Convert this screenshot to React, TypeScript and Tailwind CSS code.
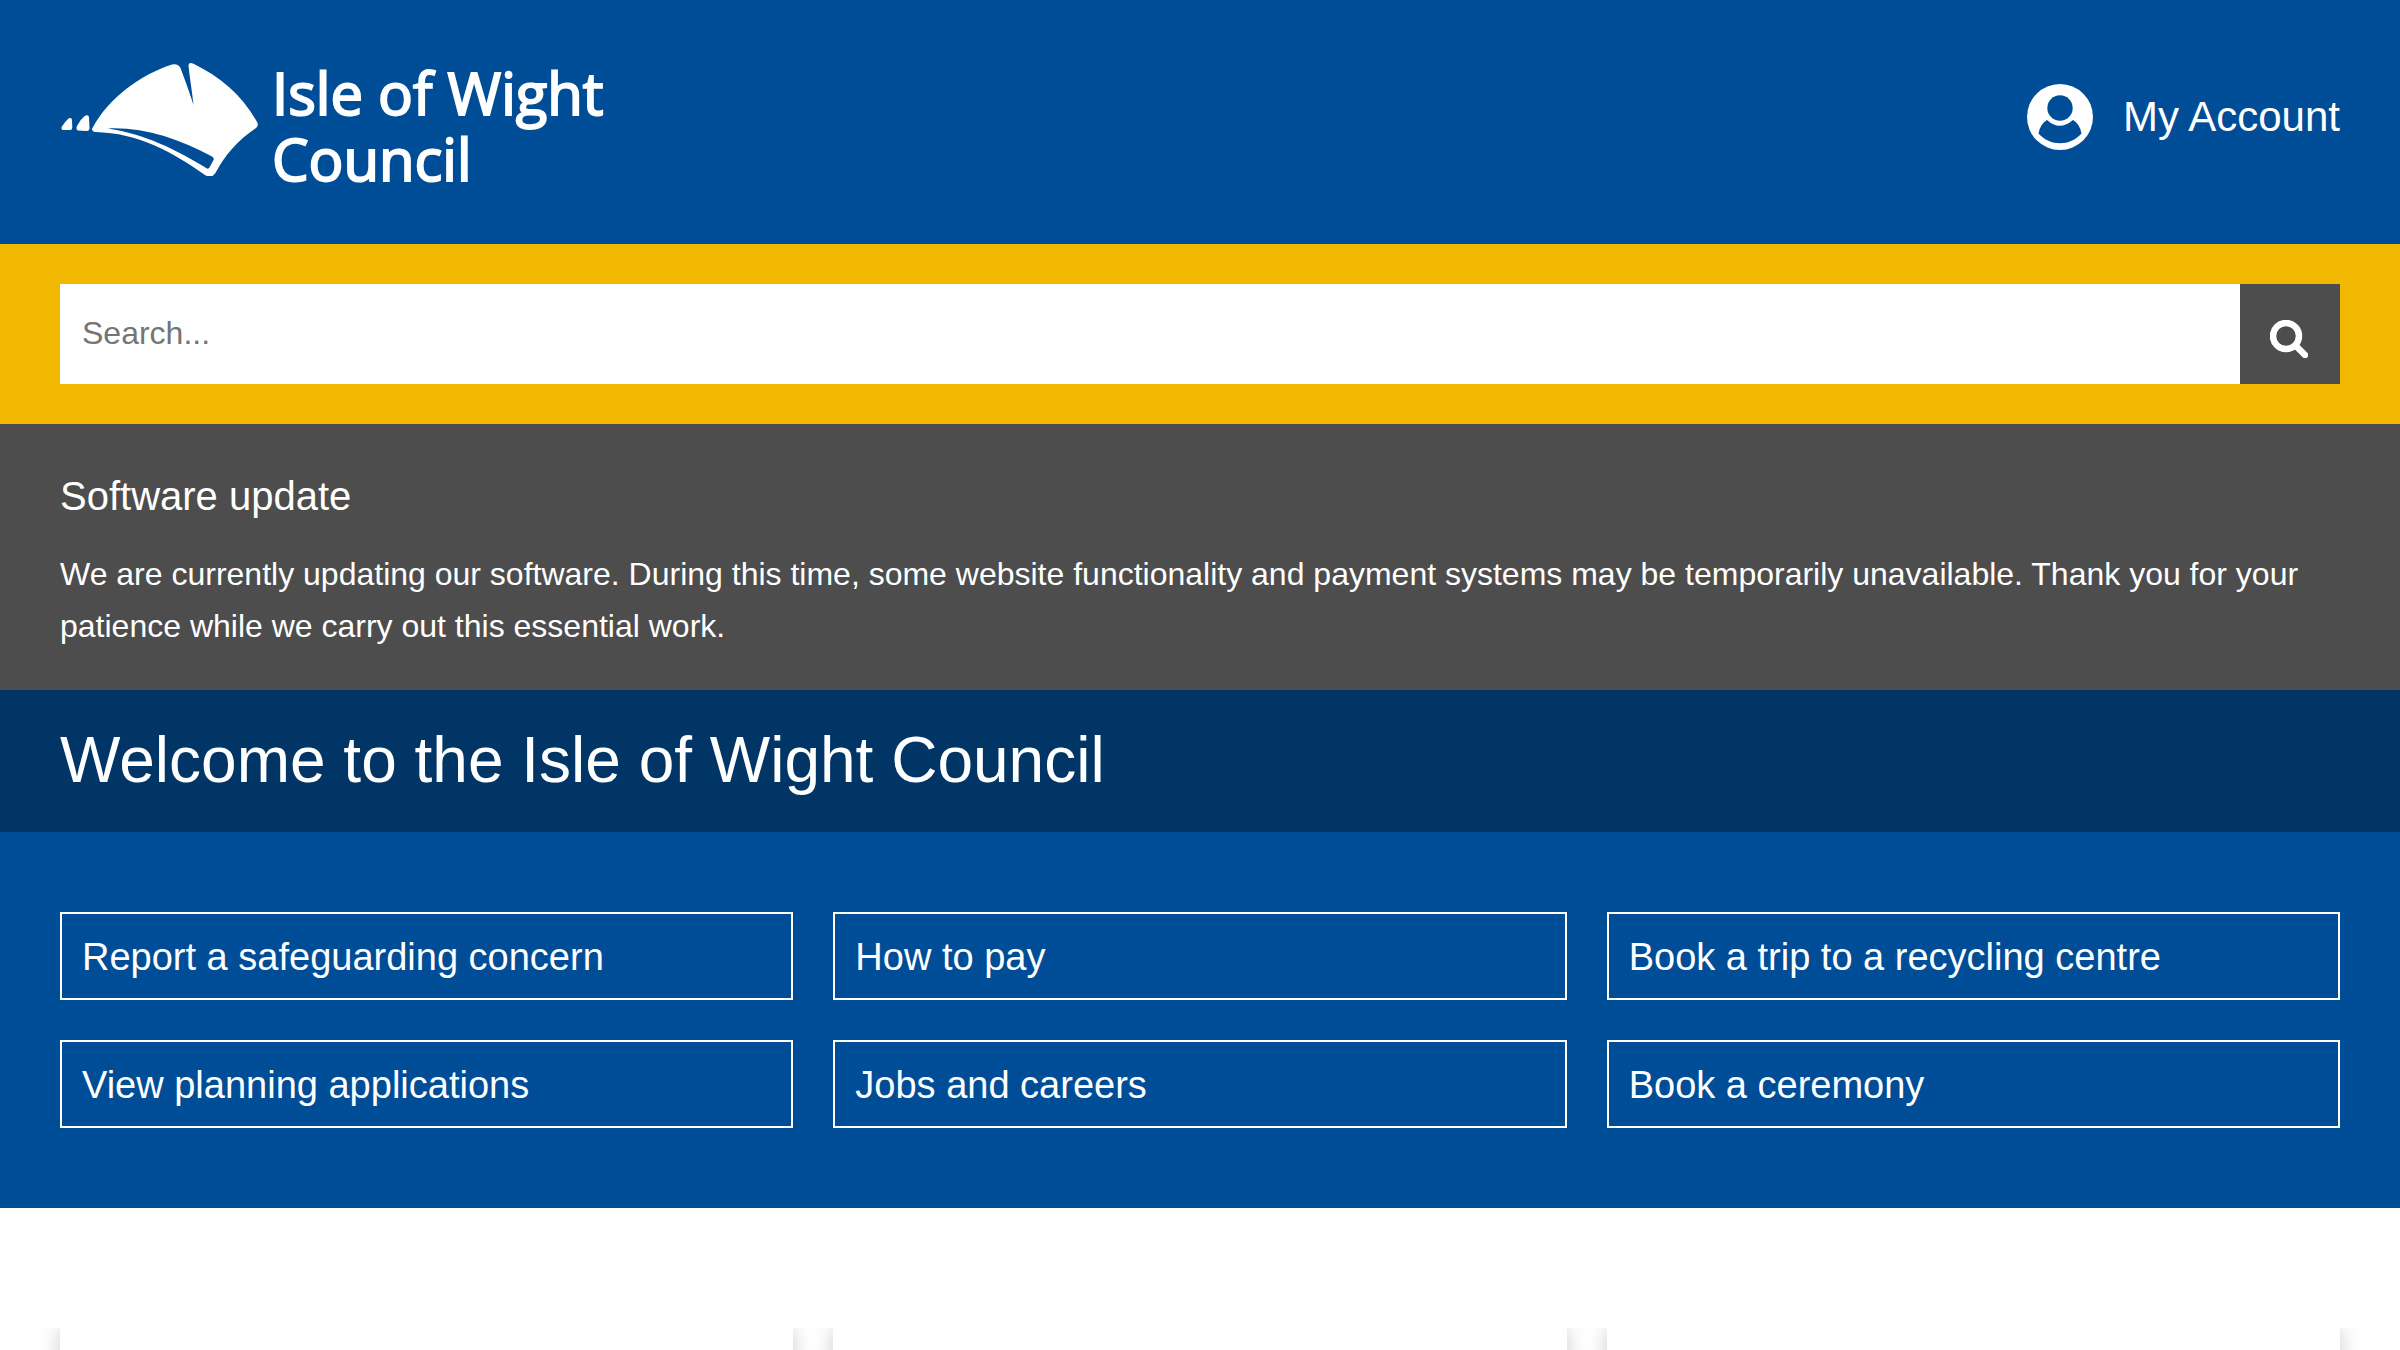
import * as React from "react";

type QuickLink = { label: string; href: string };

const quickLinks: QuickLink[] = [
  { label: "Report a safeguarding concern", href: "#safeguarding" },
  { label: "How to pay", href: "#pay" },
  { label: "Book a trip to a recycling centre", href: "#recycling" },
  { label: "View planning applications", href: "#planning" },
  { label: "Jobs and careers", href: "#jobs" },
  { label: "Book a ceremony", href: "#ceremony" },
];

function LogoMark() {
  return (
    <svg viewBox="0 0 200 116" className="h-[116px] w-[200px]" fill="#fff" aria-hidden="true">
      {/* small stacks */}
      <path d="M3 70 Q0.500 69.500 2 66.500 Q5 61.500 8.500 58.500 Q12 57 12 60.500 L12.300 67.500 Q12.300 70 10 70Z" />
      <path d="M18 70.500 Q15.500 69.500 17 66 Q20 59.500 25 55.700 Q28.700 54 29 57.500 L29.500 68 Q29.500 71 26.500 71Z" />
      {/* headland, with the crack at the top and the curved groove below */}
      <path
        fillRule="evenodd"
        d="M33 71 Q31 69.500 33 67 C49 38 80 15 112 4.500 Q118 3 120.500 8 C125 20 129 31 133.500 45 C132 31 130 20 128.500 6 Q128.500 1.500 133 3.500 C161 17 183 36 197.500 63 Q198.500 66 196 68 C178 80 165 95 156 112 Q152 119.500 145 115 C112 92 79 73 35 72 Q33.500 71.800 33 71Z M48 68.500 C85 74 117 90 147 108.500 Q148.500 109 149.500 107.500 L153.500 100 Q154.500 98 152 96.500 C119 79 84 67 48 68.500Z"
      />
    </svg>
  );
}

function AccountIcon() {
  return (
    <svg viewBox="0 0 66 66" className="size-[66px]" aria-hidden="true">
      <circle cx="33" cy="33" r="33" fill="#fff" />
      <circle cx="33" cy="24" r="12.700" fill="#004d97" />
      <path
        d="M20 36 Q32.500 47.500 46 36 Q53 40 54.500 49.500 C43 62.500 23 62.500 11.500 49.500 Q13 40 20 36Z"
        fill="#004d97"
      />
    </svg>
  );
}

function SearchIcon() {
  return (
    <svg viewBox="0 0 38 38" className="size-[38px]" fill="none" stroke="#fff" aria-hidden="true">
      <circle cx="16" cy="16" r="13" strokeWidth="6.500" />
      <path d="M27 27 L35 35" strokeWidth="6.500" strokeLinecap="round" />
    </svg>
  );
}

function Header() {
  return (
    <header className="flex items-start justify-between bg-[#004d97] px-[60px] pt-[60px] pb-[56px]">
      <a href="#home" className="flex h-[128px] items-start gap-3">
        <LogoMark />
        <span className="font-['Open_Sans',sans-serif] text-[58px] leading-[66px] [-webkit-text-stroke:2px_white]">
          Isle of Wight
          <br />
          Council
        </span>
      </a>
      <a href="#account" className="flex items-center gap-[30px] pt-6 text-[42px] leading-[66px]">
        <AccountIcon />
        My Account
      </a>
    </header>
  );
}

function SearchBar() {
  return (
    <form
      role="search"
      className="flex bg-[#f2b700] px-[60px] py-10"
      onSubmit={(e) => e.preventDefault()}
    >
      <input
        type="text"
        aria-label="Search"
        placeholder="Search..."
        className="h-[100px] min-w-0 flex-1 bg-white px-[22px] pb-0.5 text-[32px] text-black outline-none placeholder:text-[#757575]"
      />
      <button
        type="submit"
        aria-label="Search"
        className="flex size-[100px] items-center justify-center bg-[#4d4d4d] pt-2.5 pr-0.5"
      >
        <SearchIcon />
      </button>
    </form>
  );
}

export default function App() {
  return (
    <div className="h-screen overflow-hidden bg-white font-['Liberation_Sans',Arial,sans-serif] text-white">
      <Header />
      <SearchBar />

      <section className="bg-[#4d4d4d] px-[60px] pt-10 pb-[38px]">
        <h2 className="text-[40px] leading-[64px]">Software update</h2>
        <p className="mt-5 text-[32px] leading-[52px]">
          We are currently updating our software. During this time, some website functionality and
          payment systems may be temporarily unavailable. Thank you for your patience while we carry
          out this essential work.
        </p>
      </section>

      <h1 className="bg-[#003566] px-[60px] pt-5 pb-[22px] text-[64px] leading-[100px]">
        Welcome to the Isle of Wight Council
      </h1>

      <nav aria-label="Quick links" className="grid grid-cols-3 gap-10 bg-[#004d97] px-[60px] py-20">
        {quickLinks.map((link) => (
          <a
            key={link.href}
            href={link.href}
            className="border-2 border-white px-5 pt-[13px] pb-[11px] text-[38px] leading-[60px]"
          >
            {link.label}
          </a>
        ))}
      </nav>

      {/* tops of the service cards, shadows clipped along the top edge */}
      <main className="mt-[120px] grid grid-cols-3 gap-10 overflow-hidden px-[60px]">
        {[0, 1, 2].map((card) => (
          <div key={card} className="h-[400px] bg-white shadow-[0_0_20px_rgba(0,0,0,0.2)]" />
        ))}
      </main>
    </div>
  );
}
